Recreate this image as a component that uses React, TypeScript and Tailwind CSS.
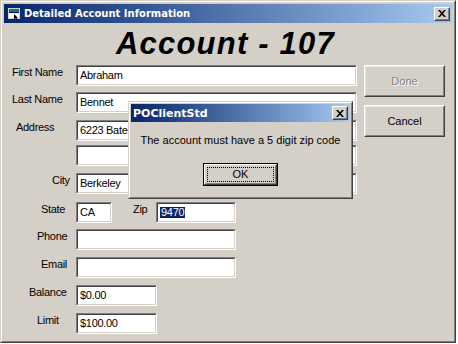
import React from "react";

const sans = "font-['Liberation_Sans',Arial,sans-serif]";

function Sunken({ w, children }: { w: string; children?: React.ReactNode }) {
  return (
    <div className={`${w} h-[21px] border border-t-[#808080] border-l-[#808080] border-b-white border-r-white`}>
      <div className="w-full h-full border border-t-[#404040] border-l-[#404040] border-b-[#d4d0c8] border-r-[#d4d0c8] bg-white flex items-center pl-[2px] text-[11px] tracking-[-0.3px] text-black leading-none">
        {children}
      </div>
    </div>
  );
}

function Raised({ w, h, children }: { w: string; h: string; children?: React.ReactNode }) {
  return (
    <div className={`${w} ${h} border border-t-white border-l-white border-b-[#404040] border-r-[#404040]`}>
      <div className="w-full h-full border border-t-[#e8e6e0] border-l-[#e8e6e0] border-b-[#808080] border-r-[#808080] flex items-center justify-center text-[11px]">
        {children}
      </div>
    </div>
  );
}

function CloseBtn() {
  return (
    <div className="w-[16px] h-[14px] bg-[#d4d0c8] border border-t-white border-l-white border-b-[#404040] border-r-[#404040]">
      <div className="w-full h-full border border-t-[#d4d0c8] border-l-[#d4d0c8] border-b-[#808080] border-r-[#808080] flex items-center justify-center">
        <svg width="8" height="7" viewBox="0 0 8 7">
          <path d="M0 0h2l2 2.2L6 0h2L5 3.5 8 7H6L4 4.8 2 7H0l3-3.5z" fill="#000" />
        </svg>
      </div>
    </div>
  );
}

function Label({ pl, children }: { pl: string; children: React.ReactNode }) {
  return (
    <div className={`w-[72px] shrink-0 ${pl} text-[11px] leading-[14px] tracking-[-0.3px] text-black`}>{children}</div>
  );
}

export default function App() {
  return (
    <div className={`w-[458px] h-[344px] bg-white ${sans}`}>
      <div className="w-[456px] h-[343px] border border-t-[#d4d0c8] border-l-[#d4d0c8] border-b-[#404040] border-r-[#404040]">
        <div className="w-full h-full border border-t-white border-l-white border-b-[#808080] border-r-[#808080] bg-[#d4d0c8] p-[2px] flex flex-col">
          {/* title bar */}
          <div className="h-[19px] shrink-0 flex items-center bg-gradient-to-r from-[#0a246a] to-[#a6caf0] pl-[4px] pr-[2px]">
            <svg width="13" height="12" viewBox="0 0 13 12" className="shrink-0">
              <rect x="0.5" y="0.5" width="11" height="10" fill="#ffffff" stroke="#d4d0c8" />
              <rect x="1" y="1" width="10" height="3" fill="#008080" />
              <rect x="1" y="4" width="10" height="1" fill="#000080" />
              <path d="M6 6l4 4-1.5 0 1 2h-1l-1-2-1.5 1.5z" fill="#000" />
            </svg>
            <span className="ml-[3px] text-white font-bold text-[10px] font-['DejaVu_Sans',sans-serif] leading-none">
              Detailed Account Information
            </span>
            <div className="ml-auto">
              <CloseBtn />
            </div>
          </div>

          {/* body */}
          <div className="relative flex-1 mt-[1px]">
            <div className="flex">
              <div className="w-[353px] flex flex-col">
                <div className="h-[31px] mt-[4px] pl-[112px] text-[31px] leading-[31px] font-bold italic tracking-[1.2px] text-black whitespace-nowrap">
                  Account - 107
                </div>
                <div className="flex mt-[6px]">
                  <Label pl="pl-[8px]">First Name</Label>
                  <Sunken w="w-[281px]">Abraham</Sunken>
                </div>
                <div className="flex mt-[6px]">
                  <Label pl="pl-[8px]">Last Name</Label>
                  <Sunken w="w-[281px]">Bennet</Sunken>
                </div>
                <div className="flex mt-[7px]">
                  <Label pl="pl-[12px]">Address</Label>
                  <Sunken w="w-[281px]">6223 Bateman</Sunken>
                </div>
                <div className="flex mt-[4px]">
                  <Label pl="pl-[8px]"></Label>
                  <Sunken w="w-[281px]"></Sunken>
                </div>
                <div className="flex mt-[7px]">
                  <Label pl="pl-[48px]">City</Label>
                  <Sunken w="w-[281px]">Berkeley</Sunken>
                </div>
                <div className="flex mt-[8px]">
                  <Label pl="pl-[37px]">State</Label>
                  <Sunken w="w-[36px]">CA</Sunken>
                  <div className="w-[44px] pl-[21px] text-[11px] leading-[14px] tracking-[-0.3px]">Zip</div>
                  <Sunken w="w-[80px]">
                    <span className="bg-[#0a246a] text-white px-[1px]">9470</span>
                  </Sunken>
                </div>
                <div className="flex mt-[6px]">
                  <Label pl="pl-[33px]">Phone</Label>
                  <Sunken w="w-[160px]"></Sunken>
                </div>
                <div className="flex mt-[7px]">
                  <Label pl="pl-[37px]">Email</Label>
                  <Sunken w="w-[160px]"></Sunken>
                </div>
                <div className="flex mt-[7px]">
                  <Label pl="pl-[25px]">Balance</Label>
                  <Sunken w="w-[81px]">$0.00</Sunken>
                </div>
                <div className="flex mt-[7px]">
                  <Label pl="pl-[33px]">Limit</Label>
                  <Sunken w="w-[81px]">$100.00</Sunken>
                </div>
              </div>
              <div className="ml-[7px] mt-[41px] flex flex-col gap-[8px]">
                <Raised w="w-[81px]" h="h-[32px]">
                  <span className="text-[#808080] [text-shadow:1px_1px_0_#ffffff]">Done</span>
                </Raised>
                <Raised w="w-[81px]" h="h-[32px]">
                  <span className="text-black">Cancel</span>
                </Raised>
              </div>
            </div>

            {/* dialog */}
            <div className="absolute left-[124px] top-[77px] w-[225px] h-[98px] border border-t-[#d4d0c8] border-l-[#d4d0c8] border-b-[#404040] border-r-[#404040]">
              <div className="w-full h-full border border-t-white border-l-white border-b-[#808080] border-r-[#808080] bg-[#d4d0c8] p-[1px] flex flex-col">
                <div className="h-[18px] shrink-0 flex items-center bg-gradient-to-r from-[#0a246a] to-[#a6caf0] pl-[2px] pr-[2px]">
                  <span className="text-white font-bold text-[11px] font-['DejaVu_Sans',sans-serif] leading-none">POClientStd</span>
                  <div className="ml-auto">
                    <CloseBtn />
                  </div>
                </div>
                <div className="mt-[11px] text-center text-[11px] leading-[14px] text-black">
                  The account must have a 5 digit zip code
                </div>
                <div className="mt-[16px] flex justify-center">
                  <div className="w-[75px] h-[23px] border border-black">
                    <div className="w-full h-full border border-t-white border-l-white border-b-[#404040] border-r-[#404040]">
                      <div className="w-full h-full border border-t-[#d4d0c8] border-l-[#d4d0c8] border-b-[#808080] border-r-[#808080] p-[1px]">
                        <div className="w-full h-full border border-dotted border-black flex items-center justify-center text-[11px] text-black">
                          OK
                        </div>
                      </div>
                    </div>
                  </div>
                </div>
              </div>
            </div>
          </div>
        </div>
      </div>
    </div>
  );
}
